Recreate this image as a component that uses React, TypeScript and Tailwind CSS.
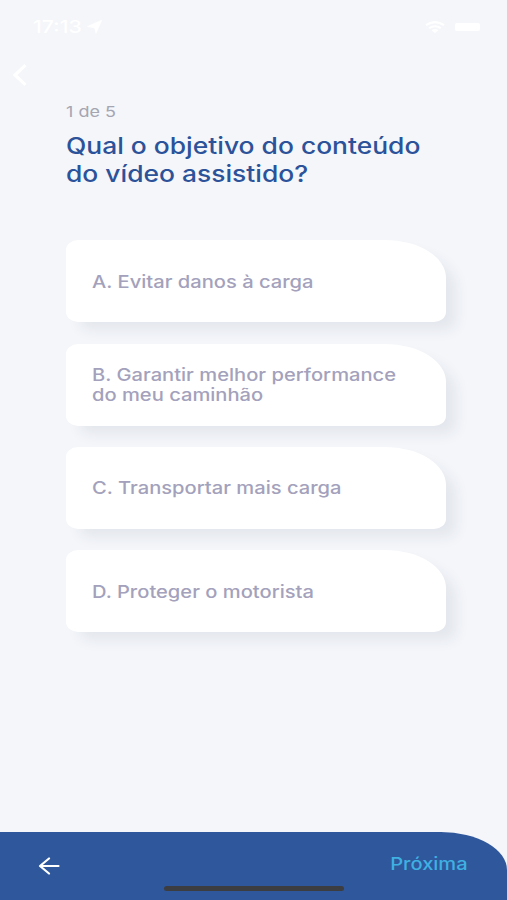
import React from "react";

const options = [
  { lines: ["A. Evitar danos à carga"] },
  { lines: ["B. Garantir melhor performance", "do meu caminhão"] },
  { lines: ["C. Transportar mais carga"] },
  { lines: ["D. Proteger o motorista"] },
];

function StatusBar() {
  return (
    <div className="flex h-[54px] items-center justify-between pl-[33px] pr-[27px] text-white">
      <div className="flex items-center gap-[4px]">
        <span className="w-[50px] whitespace-nowrap">
          <span className="inline-block origin-left scale-x-[1.25] text-[17px] leading-5 font-medium">17:13</span>
        </span>
        <svg width="15" height="14" viewBox="0 0 15 14" fill="currentColor">
          <path d="M15 0 9 13.500 7.500 8 0 6.500Z" stroke="currentColor" strokeWidth="0.500" />
        </svg>
      </div>
      <div className="flex items-center gap-[10px]">
        <svg width="20" height="12" viewBox="0 0 20 12" fill="none" stroke="currentColor" strokeWidth="2.2">
          <path d="M1 4.2Q10-2 19 4.2M4.2 7.2Q10 3.3 15.8 7.2" />
          <path d="M6.5 9.2Q10 7 13.5 9.2L10 12Z" fill="currentColor" stroke="none" />
        </svg>
        <span className="h-2 w-[25px] rounded-[2px] bg-white" />
      </div>
    </div>
  );
}

export default function App() {
  return (
    <main className="flex h-[900px] w-[507px] flex-col overflow-hidden bg-[#f4f6fa] font-['Inter','Liberation_Sans',sans-serif]">
      <StatusBar />
      <button className="ml-[12px] mt-[10px] block h-[22px] w-[16px] text-white" aria-label="Voltar">
        <svg width="16" height="22" viewBox="0 0 16 22" fill="none" stroke="currentColor" strokeWidth="3.2">
          <path d="M13.500 1.200 3 11l10.500 9.800" />
        </svg>
      </button>
      <header className="mt-[17px] pl-[66px]">
        <p className="w-max origin-left scale-x-[1.2] text-[15px] leading-[18px] text-[#a5a5b1]">1 de 5</p>
        <h1 className="mt-[11px] text-[23px] leading-[28px] font-medium text-[#2c5299]">
          <span className="block w-max origin-left scale-x-[1.148]">Qual o objetivo do conteúdo</span>
          <span className="block w-max origin-left scale-x-[1.148]">do vídeo assistido?</span>
        </h1>
      </header>
      <section className="mt-[52.4px] flex flex-col gap-[21.3px] pl-[65.5px]">
        {options.map((option) => (
          <button
            key={option.lines[0]}
            className="flex h-[82px] w-[380px] flex-col justify-center rounded-tl-[12px_10px] rounded-tr-[60px_38px] rounded-br-[12px_10px] rounded-bl-[12px_10px] bg-white pt-px pl-[26.5px] text-left text-[17px] leading-[20px] font-medium text-[#a3a1bb] shadow-[12px_10px_14px_-2px_rgba(40,50,75,0.08)]"
          >
            {option.lines.map((line) => (
              <span key={line} className="block w-max origin-left scale-x-[1.184]">{line}</span>
            ))}
          </button>
        ))}
      </section>
      <footer className="relative mt-auto flex h-[68px] items-start justify-between rounded-tr-[66px_38px] bg-[#2f579b] pl-[38px] pr-[39px]">
        <svg className="mt-[25px] text-white" width="22" height="18" viewBox="0 0 22 18" fill="none" stroke="currentColor" strokeWidth="2.2" strokeLinecap="round" strokeLinejoin="round">
          <path d="M20.500 9H2.500M11 1.500 2 9l9 7.500" />
        </svg>
        <span className="mt-[22px] w-max origin-right scale-x-[1.18] text-[17px] leading-5 font-medium text-[#3fb0e2]">Próxima</span>
        <div className="absolute bottom-[9px] left-[164px] h-[5px] w-[180px] rounded-full bg-[#3c3d40]" />
      </footer>
    </main>
  );
}
